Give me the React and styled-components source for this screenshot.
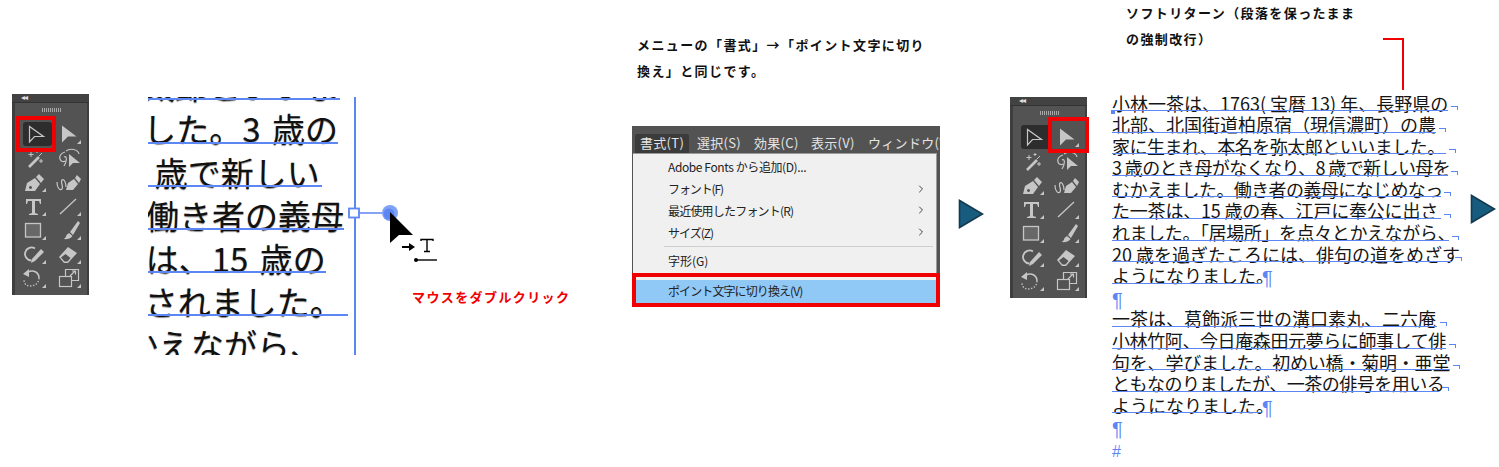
import styled, { createGlobalStyle } from "styled-components";
import { ChevronRight } from "lucide-react";

const JP = `"Noto Sans CJK JP", "Liberation Sans", sans-serif`;
const BLUE = "#5b86f3";
const RED = "#f00000";
const ICON = "#c6c6c6";

const GlobalStyle = createGlobalStyle`
  html, body {
    margin: 0;
    padding: 0;
    background: #fff;
    font-family: ${JP};
  }
`;

const Page = styled.div`
  display: flex;
  align-items: flex-start;
  width: 1499px;
  height: 467px;
  padding-left: 12px;
  box-sizing: border-box;
  overflow: hidden;
`;

/* tools panel */
const ToolPanel = styled.div`
  position: relative;
  flex: none;
  width: 77px;
  height: 201px;
  margin-top: ${(p) => p.$top}px;
  margin-left: ${(p) => p.$left}px;
  box-sizing: border-box;
  background: #535353;
  border-left: 3px solid #3e3e3e;
  border-right: 2px solid #3e3e3e;
`;

const PanelTitle = styled.div`
  height: 8px;
  margin: 0 -2px 0 -3px;
  padding: 0 0 0 9px;
  background: #424242;
  border-bottom: 1px solid #333;
  color: #e0e0e0;
  font: 700 8px/8px "DejaVu Sans", sans-serif;
  letter-spacing: -1px;
`;

const Grip = styled.div`
  width: 20px;
  height: 4px;
  margin: 5px 0 0 27px;
  background: repeating-linear-gradient(90deg, #a8a8a8 0 1px, #535353 1px 2px);
`;

const ToolGrid = styled.div`
  display: grid;
  grid-template-columns: 35px 35px;
  grid-auto-rows: 24px;
  margin: 10px 0 0 1px;
`;

const ToolCell = styled.div`
  position: relative;
  width: 35px;
  height: 24px;
  svg {
    position: relative;
    display: block;
  }
`;

const ToolActive = styled.div`
  position: absolute;
  left: 7px;
  top: 0;
  width: 29px;
  height: 24px;
  border-radius: 3px;
  background: #2d2d2d;
`;

const ToolFrame = styled.div`
  position: absolute;
  left: ${(p) => p.$left}px;
  top: ${(p) => p.$t}px;
  width: ${(p) => p.$w}px;
  height: 36px;
  box-sizing: border-box;
  border: 4px solid ${RED};
  pointer-events: none;
`;

const Corner = () => <path d="M26 22h4v-4z" fill={ICON} />;

const tools = [
  { active: true, d: <path d="M13.500 4.500v15.500l5-5.500h9z" fill="none" stroke={ICON} strokeWidth="1.200" /> },
  { corner: true, d: <path d="M11 3.500v17l6-6h8.500z" fill={ICON} /> },
  {
    d: (
      <>
        <path d="M13 21l10-10" stroke={ICON} strokeWidth="2.600" fill="none" />
        <path d="M23 10l3-3M15 6v5M12.500 8.500h5M25 13v4M23 15h4M21 4v3M19.500 5.500h3" stroke={ICON} strokeWidth="1" fill="none" />
      </>
    ),
  },
  {
    d: (
      <>
        <path d="M15 5c4-3 12-2 13 3" fill="none" stroke={ICON} strokeWidth="1.200" />
        <path d="M14 6c-4 1-6 4-5 7 1 3 4 3 5 2M13 11c2-1 3 1 2 4 0 2-1 3-2 5" fill="none" stroke={ICON} strokeWidth="1.200" />
        <path d="M18 8v13l4-4h7z" fill={ICON} />
      </>
    ),
  },
  {
    corner: true,
    d: (
      <path
        d="M9 21l2-8 8-5 5 6-5 7zM14.500 16a1.500 1.500 0 1 0 .01 0zM20 7l3-3 5 5-3 4z"
        fill={ICON}
        fillRule="evenodd"
      />
    ),
  },
  {
    d: (
      <>
        <path d="M6 12c0 6 3 9 5 7 2-2-2-7 0-9 2-2 4 3 4 7" fill="none" stroke={ICON} strokeWidth="1.200" />
        <path d="M15 20l2-7 6-4 4 5-5 6zM24 8l2-3 4 4-2 4z" fill={ICON} />
      </>
    ),
  },
  {
    corner: true,
    d: (
      <path
        d="M10 5h15v5h-1l-1-3h-4v12l3 1v1h-9v-1l3-1v-12h-4l-1 3h-1z"
        fill={ICON}
      />
    ),
  },
  { corner: true, d: <path d="M9 20l16-15" stroke={ICON} strokeWidth="1.300" fill="none" /> },
  { corner: true, d: <rect x="9.500" y="5.500" width="15" height="13.500" fill="#686868" stroke={ICON} strokeWidth="1.300" /> },
  {
    corner: true,
    d: <path d="M27 3l-8 11 3 3 7-12zM18 15l3.500 3c-2 3-6 3.500-9 3 2-1 2.500-2 3-4z" fill={ICON} />,
  },
  {
    d: (
      <>
        <path d="M19 6.500a6.500 6.500 0 1 0-3.500 12" fill="none" stroke={ICON} strokeWidth="1.800" />
        <path d="M15 21l1-4 9-10 3 3-9 9z" fill={ICON} />
      </>
    ),
    corner: true,
  },
  { corner: true, d: <path d="M8 15l9-10 9 6-9 10h-4zM10 15.500l3.500 4h3l3-3.500-5-4z" fill={ICON} fillRule="evenodd" /> },
  {
    corner: true,
    d: (
      <>
        <path d="M12 6c6-3 11 1 11 6" fill="none" stroke={ICON} strokeWidth="1.500" />
        <path d="M23 12c0 5-4 8-9 8-4 0-6-3-6-6" fill="none" stroke={ICON} strokeWidth="1.300" strokeDasharray="1.400 1.600" />
        <path d="M7 8l6-5v8z" fill={ICON} />
      </>
    ),
  },
  {
    corner: true,
    d: (
      <>
        <path d="M14.500 10.500v-7h13v11h-7" fill="none" stroke={ICON} strokeWidth="1.200" />
        <rect x="8.500" y="10.500" width="12" height="10" fill="none" stroke={ICON} strokeWidth="1.200" />
        <path d="M19 10l5-5M21 5h3.500v3.500" fill="none" stroke={ICON} strokeWidth="1.200" />
      </>
    ),
  },
];

const Tools = ({ top, left, frameLeft, frameTop, frameWidth }) => (
  <ToolPanel $top={top} $left={left}>
    <PanelTitle>◂◂</PanelTitle>
    <Grip />
    <ToolGrid>
      {tools.map((tool, i) => (
        <ToolCell key={i}>
          {tool.active && <ToolActive />}
          <svg width="35" height="24" viewBox="0 0 35 24">
            {tool.d}
            {tool.corner && <Corner />}
          </svg>
        </ToolCell>
      ))}
    </ToolGrid>
    <ToolFrame $left={frameLeft} $t={frameTop} $w={frameWidth} />
  </ToolPanel>
);

/* enlarged text with the out port */
const CropWrap = styled.div`
  position: relative;
  flex: none;
  width: 208px;
  height: 258px;
  margin: 97px 0 0 59px;
`;

const Crop = styled.div`
  width: 206px;
  height: 258px;
  border-right: 2px solid ${BLUE};
  overflow: hidden;
`;

const BigLines = styled.div`
  display: flex;
  flex-direction: column;
  margin-top: -39.800px;
`;

const BigLine = styled.div`
  position: relative;
  display: flex;
  justify-content: flex-end;
  flex: none;
  width: ${(p) => p.$w}px;
  height: 43.200px;
  box-sizing: border-box;
  padding: 12px ${(p) => p.$pad || 0}px 0 0;
  font-size: 33px;
  line-height: 33px;
  word-spacing: 4px;
  white-space: pre;
  color: #111;
  text-shadow: 0 1px 1px rgba(0, 0, 0, 0.45);
  &::after {
    content: "";
    position: absolute;
    left: 0;
    right: 0;
    bottom: 0;
    height: 2px;
    background: ${(p) => (p.$plain ? "transparent" : BLUE)};
  }
`;

const PortDrawing = styled.svg`
  position: absolute;
  left: 198px;
  top: 108px;
`;

const DoubleClickLabel = styled.span`
  position: absolute;
  left: 264px;
  top: 191px;
  font-size: 13px;
  line-height: 18px;
  font-weight: 700;
  letter-spacing: 1.400px;
  white-space: nowrap;
  color: ${RED};
`;

/* menu */
const MenuColumn = styled.div`
  flex: none;
  width: 308px;
  margin: 32px 0 0 276px;
`;

const Caption = styled.p`
  margin: 0;
  padding-left: ${(p) => p.$pad}px;
  font-size: 13px;
  line-height: 25.500px;
  font-weight: 700;
  letter-spacing: 1.400px;
  white-space: nowrap;
  color: #111;
`;

const Menu = styled.div`
  margin-top: 43px;
  background: #535353;
`;

const MenuBar = styled.div`
  display: flex;
  height: 27px;
  padding: 8px 0 0 3px;
  box-sizing: border-box;
  overflow: hidden;
`;

const MenuBarItem = styled.div`
  flex: none;
  width: 49px;
  height: 19px;
  padding-left: 5px;
  margin-right: 3px;
  border-radius: 2px 2px 0 0;
  background: ${(p) => (p.$active ? "#3b3b3b" : "transparent")};
  color: #e4e4e4;
  font-size: 13px;
  line-height: 17px;
  letter-spacing: 0.300px;
  white-space: nowrap;
`;

const Dropdown = styled.div`
  width: 304px;
  height: 120px;
  margin-left: 1px;
  padding-top: 2px;
  box-sizing: border-box;
  background: #f0f0f0;
  border-top: 1px solid #9a9a9a;
  border-right: 1px solid #9a9a9a;
`;

const MenuItem = styled.div`
  display: flex;
  align-items: center;
  justify-content: space-between;
  height: 21.800px;
  padding: 0 9px 0 35px;
  font-size: 12px;
  letter-spacing: ${(p) => p.$track || 0}px;
  color: #222;
  white-space: nowrap;
  svg {
    color: #444;
  }
`;

const MenuSeparator = styled.div`
  height: 1px;
  margin: 3px 3px 2px 31px;
  background: #cfcfcf;
`;

const HighlightFrame = styled.div`
  height: 34px;
  box-sizing: border-box;
  border: 4px solid ${RED};
  background: #f0f0f0;
  padding-top: 3px;
`;

const HighlightItem = styled.div`
  height: 23px;
  padding-left: 32px;
  background: #90c8f6;
  font-size: 12px;
  letter-spacing: -0.900px;
  line-height: 22px;
  color: #222;
  white-space: nowrap;
`;

const Arrow = styled.svg`
  flex: none;
  margin-top: ${(p) => p.$top}px;
  margin-left: ${(p) => p.$left}px;
`;

const NextArrow = ({ top, left }) => (
  <Arrow $top={top} $left={left} width="26" height="30" viewBox="0 0 26 30">
    <path d="M1.500 1.500v27l23-13.500z" fill="#175b7e" stroke="#123a50" strokeWidth="1.600" />
  </Arrow>
);

/* text frame */
const TextColumn = styled.div`
  position: relative;
  flex: none;
  width: 358px;
  height: 467px;
  margin-left: 25px;
`;

const AnnotationBox = styled.div`
  height: 89.500px;
`;

const Leader = styled.div`
  position: absolute;
  left: 271px;
  top: 38px;
  width: 19px;
  height: 50px;
  border-top: 2px solid ${RED};
  border-right: 2px solid ${RED};
`;

const TextRow = styled.div`
  position: relative;
  display: flex;
  align-items: flex-start;
  height: 21.600px;
`;

const LineText = styled.div`
  position: relative;
  flex: none;
  width: ${(p) => p.$w}px;
  height: 21.600px;
  box-sizing: border-box;
  padding-top: 4px;
  font-size: 18px;
  line-height: 18px;
  letter-spacing: ${(p) => p.$track || 0}px;
  white-space: nowrap;
  color: #151515;
  &::after {
    content: "";
    position: absolute;
    left: 0;
    right: 0;
    bottom: 0;
    height: 1px;
    background: ${BLUE};
  }
`;

const SoftReturn = styled.span`
  flex: none;
  width: 6px;
  height: 3px;
  margin: 16.500px 0 0 3px;
  border-top: 1px solid ${BLUE};
  border-right: 1px solid ${BLUE};
`;

const Hidden = styled.span`
  flex: none;
  margin: 6px 0 0 ${(p) => p.$left || 0}px;
  font-family: "Liberation Sans", sans-serif;
  font-size: ${(p) => p.$size || 20}px;
  line-height: 21.600px;
  color: ${BLUE};
`;

const FrameAnchor = styled.span`
  position: absolute;
  left: -1px;
  top: 20.500px;
  width: 4px;
  height: 4px;
  background: ${BLUE};
`;

const big = [
  { w: 192, text: "太郎といいま" },
  { w: 190, text: "した。3 歳の" },
  { w: 173.7, pad: 2, text: "歳で新しい" },
  { w: 196, text: "働き者の義母" },
  { w: 177.7, text: "ちは、15 歳の" },
  { w: 199.7, pad: 5, text: "されました。" },
];

const lines = [
  { w: 336, text: "小林一茶は、1763( 宝暦 13) 年、長野県の" },
  { w: 324, text: "北部、北国街道柏原宿（現信濃町）の農" },
  { w: 334, text: "家に生まれ、本名を弥太郎といいました。", track: -0.5 },
  { w: 336, text: "3 歳のとき母がなくなり、8 歳で新しい母を", track: -0.6 },
  { w: 329, text: "むかえました。働き者の義母になじめなっ", track: -0.6 },
  { w: 329, text: "た一茶は、15 歳の春、江戸に奉公に出さ", track: -0.2 },
  { w: 337, text: "れました。「居場所」を点々とかえながら、", track: -0.4 },
  { w: 340, text: "20 歳を過ぎたころには、俳句の道をめざす", track: 0 },
  { w: 149, text: "ようになりました。", end: "para" },
  { para: true },
  { w: 325, text: "一茶は、葛飾派三世の溝口素丸、二六庵", track: 0 },
  { w: 334, text: "小林竹阿、今日庵森田元夢らに師事して俳", track: -0.4 },
  { w: 338, text: "句を、学びました。初めい橋・菊明・亜堂", track: -0.2 },
  { w: 327, text: "ともなのりましたが、一茶の俳号を用いる", track: -0.5 },
  { w: 149, text: "ようになりました。", end: "para" },
  { para: true },
];

const App = () => (
  <Page>
    <GlobalStyle />
    <Tools top={94} left={0} frameLeft={1} frameTop={22} frameWidth={40} />

    <CropWrap>
      <Crop>
        <BigLines>
          {big.map((l, i) => (
            <BigLine key={i} $w={l.w} $pad={l.pad}>
              {l.text}
            </BigLine>
          ))}
          <BigLine $w={175} $plain>
            かえながら、
          </BigLine>
        </BigLines>
      </Crop>
      <PortDrawing width="100" height="70" viewBox="0 0 100 70">
        <path d="M12 8h24" stroke={BLUE} strokeWidth="1.500" />
        <rect x="3" y="3.500" width="10" height="9" fill="#fff" stroke={BLUE} strokeWidth="1.800" />
        <circle cx="44" cy="8" r="8" fill="#7fa2f5" />
        <circle cx="43" cy="9" r="5.500" fill={BLUE} />
        <path d="M44 7v31l9-8h14z" fill="#000" />
        <path d="M56 41h7v-3l6 4-6 4v-3h-7z" fill="#000" />
        <path d="M75 36v-1.500h12v1.500M81 34.500v12M78 46.500h6" stroke="#000" strokeWidth="1.400" fill="none" />
        <path d="M70 55h21" stroke="#000" strokeWidth="1.400" />
        <circle cx="70" cy="55" r="2" fill="#000" />
      </PortDrawing>
      <DoubleClickLabel>マウスをダブルクリック</DoubleClickLabel>
    </CropWrap>

    <MenuColumn>
      <Caption $pad={5}>
        メニューの「書式」→「ポイント文字に切り
        <br />
        換え」と同じです。
      </Caption>
      <Menu>
        <MenuBar>
          <MenuBarItem $active>書式(T)</MenuBarItem>
          <MenuBarItem>選択(S)</MenuBarItem>
          <MenuBarItem>効果(C)</MenuBarItem>
          <MenuBarItem>表示(V)</MenuBarItem>
          <MenuBarItem>ウィンドウ(W)</MenuBarItem>
        </MenuBar>
        <Dropdown>
          <MenuItem $track={-0.4}>Adobe Fonts から追加(D)...</MenuItem>
          <MenuItem $track={-1.1}>
            フォント(F)
            <ChevronRight size={12} />
          </MenuItem>
          <MenuItem $track={-0.8}>
            最近使用したフォント(R)
            <ChevronRight size={12} />
          </MenuItem>
          <MenuItem $track={-1}>
            サイズ(Z)
            <ChevronRight size={12} />
          </MenuItem>
          <MenuSeparator />
          <MenuItem>字形(G)</MenuItem>
        </Dropdown>
        <HighlightFrame>
          <HighlightItem>ポイント文字に切り換え(V)</HighlightItem>
        </HighlightFrame>
      </Menu>
    </MenuColumn>

    <NextArrow top={199} left={18} />

    <Tools top={97} left={26} frameLeft={35} frameTop={20} frameWidth={41} />

    <TextColumn>
      <AnnotationBox>
        <Caption $pad={14}>
          ソフトリターン（段落を保ったまま
          <br />
          の強制改行）
        </Caption>
      </AnnotationBox>
      <Leader />
      {lines.map((l, i) => (
        <TextRow key={i}>
          {i === 0 && <FrameAnchor />}
          {l.para ? (
            <Hidden>¶</Hidden>
          ) : (
            <>
              <LineText $w={l.w} $track={l.track}>
                {l.text}
              </LineText>
              {l.end === "para" ? <Hidden $left={1}>¶</Hidden> : <SoftReturn />}
            </>
          )}
        </TextRow>
      ))}
      <TextRow>
        <Hidden $size={16}>#</Hidden>
      </TextRow>
    </TextColumn>

    <NextArrow top={194} left={0} />
  </Page>
);

export default App;
